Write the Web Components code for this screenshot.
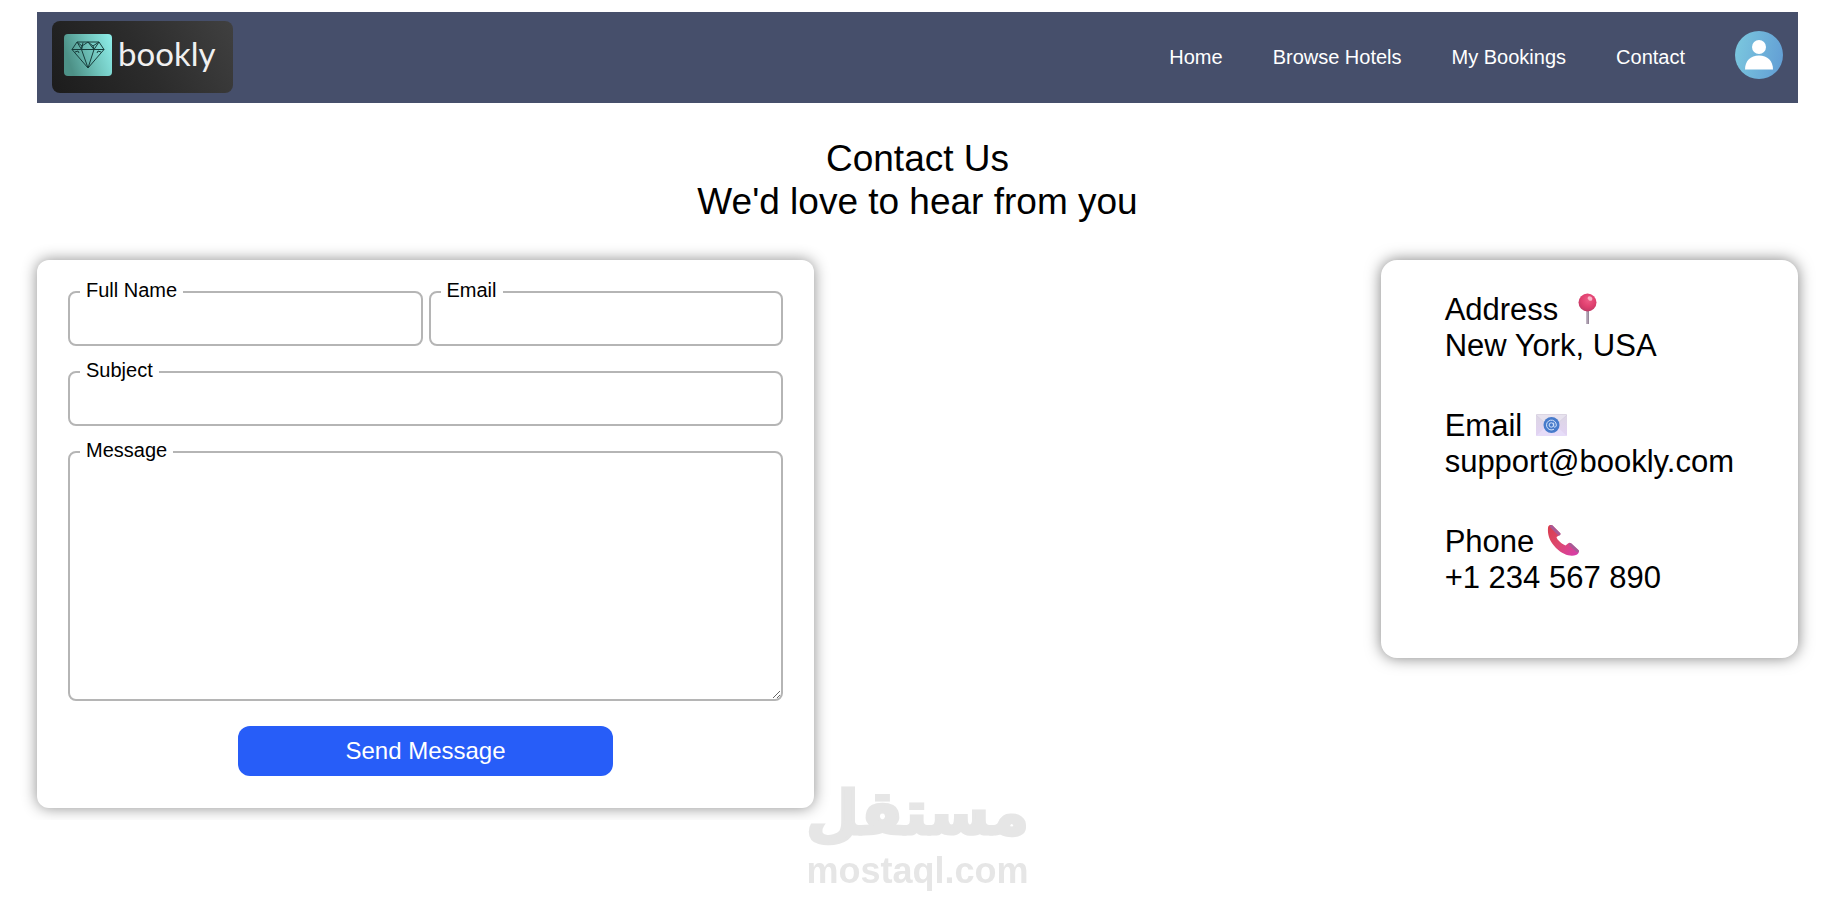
<!DOCTYPE html>
<html lang="en">
<head>
<meta charset="utf-8">
<meta name="viewport" content="width=device-width, initial-scale=1">
<title>Bookly - Contact Us</title>
<style>
  body { margin: 0; padding: 12px 37px; background: #fff; color: #000; font-family: "Liberation Sans", Arial, sans-serif; }
</style>
</head>
<body>
<contact-page></contact-page>

<script>
const define = (name, html, setup) => {
  const template = document.createElement('template');
  template.innerHTML = html;
  customElements.define(name, class extends HTMLElement {
    constructor() {
      super();
      this.attachShadow({ mode: 'open' }).append(template.content.cloneNode(true));
    }
    connectedCallback() { if (setup) setup(this, this.shadowRoot); }
  });
};

define('bookly-logo', `
  <style>
    :host { display: block; }
    a { display: flex; align-items: flex-start; box-sizing: border-box; width: 181px; height: 72px; padding: 13px 12px;
        gap: 6px; border-radius: 8px; background: linear-gradient(60deg, #1c1c1c, #2c2c2c 50%, #404040);
        color: #f0f0f0; text-decoration: none; font: 33px/38px Lato, sans-serif; }
    svg { flex: none; display: block; }
  </style>
  <a href="#home">
    <svg width="48" height="42" viewBox="0 0 48 42" aria-hidden="true">
      <defs><linearGradient id="g" x1="0" y1="0.3" x2="1" y2="0"><stop offset="0" stop-color="#4d9187"/><stop offset=".5" stop-color="#70c4bc"/><stop offset="1" stop-color="#8fefeb"/></linearGradient></defs>
      <rect width="48" height="42" rx="4" fill="url(#g)"/>
      <path d="M13 8H35L40 15.500L24 34L8 15.500ZM8 15.500H40M13 8L17.500 15.500L19 8.500M13 8L18 12L24 8L29 12L35 8M18 12L17.500 15.500L24 34L30 15.500L29 12M24 8L30 15.500L35 8M11 18L14 17L15 19M33 19L34 17L37 18" fill="none" stroke="#173c3b" stroke-width="1"/>
    </svg>
    <span>bookly</span>
  </a>`);

define('nav-link', `
  <style>
    :host { display: block; }
    a { color: #fff; text-decoration: none; font-size: 20px; line-height: 24px; white-space: nowrap; }
    a:hover { text-decoration: underline; }
  </style>
  <a><slot></slot></a>`, (host, root) => root.querySelector('a').href = host.getAttribute('href'));

define('user-avatar', `
  <style>
    :host { display: block; margin-bottom: 4px; }
    a, svg { display: block; }
  </style>
  <a href="#profile" aria-label="Profile">
    <svg width="48" height="48" viewBox="0 0 48 48" aria-hidden="true">
      <defs><linearGradient id="g" x1="0" y1=".4" x2="1" y2=".6"><stop offset="0" stop-color="#7ac6de"/><stop offset="1" stop-color="#639fd5"/></linearGradient></defs>
      <circle cx="24" cy="24" r="24" fill="url(#g)"/>
      <circle cx="24" cy="16" r="7" fill="#fff"/>
      <path d="M10 38.500C10 30 15.500 24.500 24 24.500S38 30 38 38.500Z" fill="#fff"/>
    </svg>
  </a>`);

define('site-header', `
  <style>
    :host { display: block; background: #464f6b; }
    header { display: flex; align-items: center; justify-content: space-between; flex-wrap: wrap; padding: 9px 15px 10px; }
    nav { display: flex; align-items: center; flex-wrap: wrap; gap: 10px 50px; }
  </style>
  <header>
    <bookly-logo></bookly-logo>
    <nav>
      <nav-link href="#home">Home</nav-link>
      <nav-link href="#hotels">Browse Hotels</nav-link>
      <nav-link href="#bookings">My Bookings</nav-link>
      <nav-link href="#contact">Contact</nav-link>
      <user-avatar></user-avatar>
    </nav>
  </header>`);

define('page-title', `
  <style>
    :host { display: block; margin: 34px 0 37px; text-align: center; }
    h1, p { margin: 0; font-size: 37px; line-height: 43px; font-weight: 400; }
  </style>
  <h1><slot></slot></h1>
  <p><slot name="subtitle"></slot></p>`);

define('form-field', `
  <style>
    :host { display: block; position: relative; min-width: 0; }
    label { position: absolute; top: -12px; left: 12px; padding: 0 6px; background: #fff; font-size: 20px; line-height: 23px; }
    input, textarea { display: block; box-sizing: border-box; width: 100%; height: 55px; margin: 0; padding: 12px;
      border: 2px solid #b5b5b5; border-radius: 8px; background: none; font: 20px/24px "Liberation Sans", Arial, sans-serif; }
    textarea { height: 250px; }
  </style>
  <label for="control"></label>`, (host, root) => {
    if (root.querySelector('#control')) return;
    const type = host.getAttribute('type') || 'text';
    const control = document.createElement(type === 'textarea' ? 'textarea' : 'input');
    if (type !== 'textarea') control.type = type;
    control.id = 'control';
    root.querySelector('label').textContent = host.getAttribute('label');
    root.prepend(control);
  });

define('contact-form', `
  <style>
    :host { display: block; box-sizing: border-box; flex: 0 1 777px; padding: 31px 31px 32px; border-radius: 12px;
      background: #fff; box-shadow: 0 0 15px rgba(0, 0, 0, .45); }
    form { display: grid; grid-template-columns: 1fr 1fr; gap: 25px 6px; }
    .wide { grid-column: 1 / -1; }
    button { grid-column: 1 / -1; justify-self: center; width: 375px; max-width: 100%; height: 50px; border: 0; border-radius: 12px;
      background: #275df8; color: #fff; font: 24px/28px "Liberation Sans", Arial, sans-serif; cursor: pointer; }
  </style>
  <form>
    <form-field label="Full Name"></form-field>
    <form-field label="Email" type="email"></form-field>
    <form-field class="wide" label="Subject"></form-field>
    <form-field class="wide" label="Message" type="textarea"></form-field>
    <button type="button">Send Message</button>
  </form>`);

define('contact-detail', `
  <style>
    :host { display: block; font-size: 31px; line-height: 36px; }
    h2, p { margin: 0; font-size: 31px; line-height: 36px; font-weight: 400; white-space: nowrap; }
    h2 { display: flex; align-items: center; gap: 8px; }
  </style>
  <h2><slot name="label"></slot><slot name="icon"></slot></h2>
  <p><slot></slot></p>`);

define('contact-info', `
  <style>
    :host { display: flex; flex-direction: column; gap: 44px; padding: 32px 64px 62px; border-radius: 16px;
      background: #fff; box-shadow: 0 0 15px rgba(0, 0, 0, .5); }
    svg { display: block; }
  </style>
  <contact-detail>
    <span slot="label">Address</span>
    <svg slot="icon" width="42" height="34" viewBox="0 0 42 34" aria-hidden="true">
      <defs>
        <radialGradient id="ball" cx=".55" cy=".35" r=".65"><stop offset="0" stop-color="#ee5b86"/><stop offset=".6" stop-color="#e0406f"/><stop offset="1" stop-color="#c03a66"/></radialGradient>
        <linearGradient id="stem"><stop offset="0" stop-color="#c9bfcc"/><stop offset="1" stop-color="#8d7c90"/></linearGradient>
      </defs>
      <rect x="20" y="17" width="3" height="14" fill="url(#stem)"/>
      <circle cx="21.500" cy="9.500" r="9" fill="url(#ball)"/>
      <ellipse cx="24" cy="5.500" rx="2.500" ry="2" fill="#fbb3c6" transform="rotate(35 24 5.500)"/>
    </svg>
    New York, USA
  </contact-detail>
  <contact-detail>
    <span slot="label">Email</span>
    <svg slot="icon" width="42" height="34" viewBox="0 0 42 34" aria-hidden="true">
      <defs><linearGradient id="paper" x1="0" y1="0" x2="0" y2="1"><stop offset="0" stop-color="#dcd6e3"/><stop offset="1" stop-color="#e2d3f4"/></linearGradient></defs>
      <rect x="6" y="5" width="31" height="22" rx="1" fill="url(#paper)"/>
      <path d="M6 27L18 16H25L37 27Z" fill="#e6dcf8"/>
      <path d="M6 6L21.500 20L37 6" fill="#e7e2ee" stroke="#d8d1e3" stroke-width="1"/>
      <circle cx="21.500" cy="16" r="8" fill="#477bcb"/>
      <circle cx="21.300" cy="16" r="2.200" fill="none" stroke="#d5e4fb" stroke-width="1"/>
      <path d="M23.700 13.700V17C23.700 19 26.300 18.500 26.300 16A4.900 4.900 0 1 0 24 20.200" fill="none" stroke="#d5e4fb" stroke-width="1"/>
    </svg>
    support@bookly.com
  </contact-detail>
  <contact-detail>
    <span slot="label">Phone</span>
    <svg slot="icon" width="42" height="34" viewBox="0 0 42 34" aria-hidden="true">
      <defs><linearGradient id="tube" x1="0" y1="0" x2="1" y2="1"><stop offset="0" stop-color="#d93c4c"/><stop offset=".5" stop-color="#dd4870"/><stop offset="1" stop-color="#d63bb0"/></linearGradient></defs>
      <path d="M6 3C6 0 9 -1 11 1L18 8C19 9 18 10 17 10.500L14.500 12C15 15 20 19 23.500 20.500L26 18.500C27 17.500 28 17.500 29 18.500L36 25C38 27 36 29 34 30C29 32 21 30 14 23C7 16 5.500 9 6 3Z" fill="url(#tube)"/>
      <path d="M9.500 1.500L17 9M28.500 19.500L35.500 26" fill="none" stroke="#a85a96" stroke-width="3" stroke-linecap="round"/>
    </svg>
    +1 234 567 890
  </contact-detail>`);

define('site-watermark', `
  <style>
    :host { position: fixed; left: 0; right: 0; bottom: 16px; display: flex; flex-direction: column; align-items: center;
      color: #e6e6e6; font-weight: 700; pointer-events: none; }
    .name { font: 700 61px/74px "DejaVu Sans", sans-serif; -webkit-text-stroke: 3px #e6e6e6; }
    .domain { font-size: 36px; line-height: 42px; }
  </style>
  <span class="name" lang="ar" dir="rtl">مستقل</span>
  <span class="domain">mostaql.com</span>`);

define('contact-page', `
  <style>
    :host { display: block; }
    main > section { display: flex; align-items: flex-start; justify-content: space-between; gap: 37px; }
    @media (max-width: 1000px) { main > section { flex-direction: column; align-items: stretch; } contact-form { flex-basis: auto; } }
  </style>
  <site-header></site-header>
  <main>
    <page-title>Contact Us<span slot="subtitle">We'd love to hear from you</span></page-title>
    <section>
      <contact-form></contact-form>
      <contact-info></contact-info>
    </section>
  </main>
  <site-watermark></site-watermark>`);
</script>
</body>
</html>
